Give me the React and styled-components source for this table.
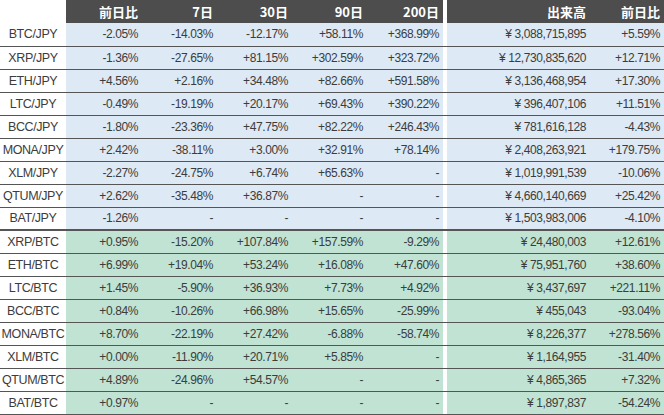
import styled, { createGlobalStyle } from "styled-components";

const Global = createGlobalStyle`
  body {
    margin: 0;
    background: #fff;
    font-family: "Liberation Sans", "Noto Sans CJK JP", sans-serif;
  }
`;

const Table = styled.table`
  border-collapse: collapse;
  table-layout: fixed;
  width: 664px;
  font-size: 12px;
  color: #3c3c3c;
  letter-spacing: -0.4px;
`;

const Head = styled.th`
  height: 23px;
  padding: 0 4px 0 0;
  text-align: right;
  background: ${props => (props.blank ? "#fff" : "#4d4d4d")};
  color: #fff;
  font-family: "Noto Sans CJK JP", sans-serif;
  font-weight: 700;
  font-size: 13px;
  letter-spacing: 0;
`;

const Row = styled.tr`
  height: 23px;
  border-bottom: ${props => (props.thick ? "2px" : "1px")} solid #555;
  background: ${props => (props.group === "btc" ? "#c0e3d3" : "#dde9f5")};
`;

const Label = styled.td`
  background: #fff;
  text-align: center;
  padding: 0;
  font-size: 12.5px;
`;

const Cell = styled.td`
  text-align: right;
  padding: 0 4px 0 0;
  white-space: nowrap;
`;

const Gap = styled.td`
  background: #fff;
  padding: 0;
`;

const GapHead = styled.th`
  background: #fff;
  padding: 0;
`;

const rows = [
  ["BTC/JPY", "-2.05%", "-14.03%", "-12.17%", "+58.11%", "+368.99%", "3,088,715,895", "+5.59%"],
  ["XRP/JPY", "-1.36%", "-27.65%", "+81.15%", "+302.59%", "+323.72%", "12,730,835,620", "+12.71%"],
  ["ETH/JPY", "+4.56%", "+2.16%", "+34.48%", "+82.66%", "+591.58%", "3,136,468,954", "+17.30%"],
  ["LTC/JPY", "-0.49%", "-19.19%", "+20.17%", "+69.43%", "+390.22%", "396,407,106", "+11.51%"],
  ["BCC/JPY", "-1.80%", "-23.36%", "+47.75%", "+82.22%", "+246.43%", "781,616,128", "-4.43%"],
  ["MONA/JPY", "+2.42%", "-38.11%", "+3.00%", "+32.91%", "+78.14%", "2,408,263,921", "+179.75%"],
  ["XLM/JPY", "-2.27%", "-24.75%", "+6.74%", "+65.63%", "-", "1,019,991,539", "-10.06%"],
  ["QTUM/JPY", "+2.62%", "-35.48%", "+36.87%", "-", "-", "4,660,140,669", "+25.42%"],
  ["BAT/JPY", "-1.26%", "-", "-", "-", "-", "1,503,983,006", "-4.10%"],
  ["XRP/BTC", "+0.95%", "-15.20%", "+107.84%", "+157.59%", "-9.29%", "24,480,003", "+12.61%"],
  ["ETH/BTC", "+6.99%", "+19.04%", "+53.24%", "+16.08%", "+47.60%", "75,951,760", "+38.60%"],
  ["LTC/BTC", "+1.45%", "-5.90%", "+36.93%", "+7.73%", "+4.92%", "3,437,697", "+221.11%"],
  ["BCC/BTC", "+0.84%", "-10.26%", "+66.98%", "+15.65%", "-25.99%", "455,043", "-93.04%"],
  ["MONA/BTC", "+8.70%", "-22.19%", "+27.42%", "-6.88%", "-58.74%", "8,226,377", "+278.56%"],
  ["XLM/BTC", "+0.00%", "-11.90%", "+20.71%", "+5.85%", "-", "1,164,955", "-31.40%"],
  ["QTUM/BTC", "+4.89%", "-24.96%", "+54.57%", "-", "-", "4,865,365", "+7.32%"],
  ["BAT/BTC", "+0.97%", "-", "-", "-", "-", "1,897,837", "-54.24%"],
];

function App() {
  return (
    <>
      <Global />
      <Table>
        <colgroup>
          <col style={{ width: 66 }} />
          <col style={{ width: 76 }} />
          <col style={{ width: 75 }} />
          <col style={{ width: 75 }} />
          <col style={{ width: 75 }} />
          <col style={{ width: 76 }} />
          <col style={{ width: 4 }} />
          <col style={{ width: 143 }} />
          <col style={{ width: 74 }} />
        </colgroup>
        <thead>
          <tr>
            <Head blank />
            <Head>前日比</Head>
            <Head>7日</Head>
            <Head>30日</Head>
            <Head>90日</Head>
            <Head>200日</Head>
            <GapHead />
            <Head>出来高</Head>
            <Head>前日比</Head>
          </tr>
        </thead>
        <tbody>
          {rows.map((r, i) => (
            <Row key={r[0]} group={i >= 9 ? "btc" : "jpy"} thick={i === 8}>
              <Label>{r[0]}</Label>
              <Cell>{r[1]}</Cell>
              <Cell>{r[2]}</Cell>
              <Cell>{r[3]}</Cell>
              <Cell>{r[4]}</Cell>
              <Cell>{r[5]}</Cell>
              <Gap />
              <Cell>¥ {r[6]}</Cell>
              <Cell>{r[7]}</Cell>
            </Row>
          ))}
        </tbody>
      </Table>
    </>
  );
}

export default App;
